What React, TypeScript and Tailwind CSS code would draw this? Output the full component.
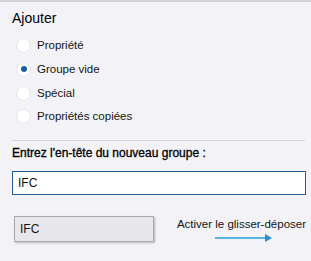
import React from "react";

const options = ["Propriété", "Groupe vide", "Spécial", "Propriétés copiées"];

const Radio = ({ checked }: { checked: boolean }) => (
  <span className="w-[15px] h-[15px] rounded-full bg-white border border-[#e4e4ea] flex items-center justify-center shrink-0">
    {checked && <span className="w-[6px] h-[6px] rounded-full bg-[#1b5e9c]" />}
  </span>
);

const App = () => {
  return (
    <div
      className="w-[311px] h-[261px] bg-[#f2f2f7] border-t-2 border-[#d3d3da] text-[#151515] text-[11.5px] overflow-hidden"
      style={{ fontFamily: '"Liberation Sans", Arial, sans-serif' }}
    >
      <div className="pl-3 pr-[5px]">
        <h2 className="text-[14px] leading-5 mt-[6px] text-black">Ajouter</h2>

        <div className="flex flex-col mt-[6px]">
          {options.map((label, i) => (
            <label key={label} className="flex items-center gap-[6px] h-[23.67px] pl-1">
              <Radio checked={i === 1} />
              <span>{label}</span>
            </label>
          ))}
        </div>

        <div className="border-t border-[#d6d6dc] mt-[11px] mr-[1px]" />

        <p className="text-[12px] leading-4 mt-[4px] text-black [-webkit-text-stroke:0.3px_#000]">
          Entrez l'en-tête du nouveau groupe :
        </p>

        <div className="mt-[10px] h-6 bg-white border border-[#1f5e99] flex items-center px-[5px] text-[12px]">
          IFC
        </div>

        <div className="flex items-start mt-[21px]">
          <div className="w-[140px] h-[26px] ml-[2px] bg-[#e7e7eb] border border-[#a8a8ae] shadow-[1px_1px_2px_rgba(0,0,0,0.25)] flex items-center px-[5px] text-[12px]">
            IFC
          </div>
          <div className="ml-auto flex flex-col items-start">
            <span className="leading-4 whitespace-nowrap">Activer le glisser-déposer</span>
            <svg width="58" height="8" viewBox="0 0 58 8" className="ml-[38px] mt-[2px]">
              <line x1="0" y1="4" x2="51" y2="4" stroke="#57b4e3" strokeWidth="2" />
              <polygon points="50,0 57,4 50,8" fill="#2e8fd0" />
            </svg>
          </div>
        </div>
      </div>
    </div>
  );
};

export default App;
